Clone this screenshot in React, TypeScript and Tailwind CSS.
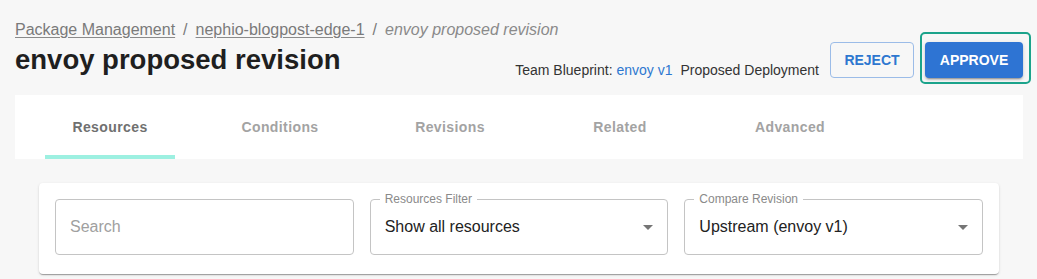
import React from "react";

function Arrow() {
  return (
    <svg width="24" height="24" viewBox="0 0 24 24" className="shrink-0 text-[#757575]" fill="currentColor">
      <path d="M7 10l5 5 5-5z" />
    </svg>
  );
}

function Field({ label, value }: { label: string; value: string }) {
  return (
    <div className="relative flex h-[56px] items-center justify-between rounded-[4px] border border-[#c4c4c4] pl-[14px] pr-[7px]">
      <span className="pointer-events-none absolute -top-[9px] left-[9px] bg-white px-[5px] text-[12px] leading-[16px] text-[#8a8a8a]">
        {label}
      </span>
      <span className="text-[16px] leading-[20px] text-[#222]">{value}</span>
      <Arrow />
    </div>
  );
}

export default function App() {
  const tabs = ["Resources", "Conditions", "Revisions", "Related", "Advanced"];
  return (
    <div className="h-screen w-full overflow-hidden bg-[#f7f7f7] font-['Liberation_Sans',Arial,sans-serif] text-[#222]">
      <div className="pl-[15px] pr-[14px] pt-[18px]">
        <div className="flex items-start justify-between">
          <div className="min-w-0 flex-1">
            <nav className="flex items-center whitespace-nowrap text-[16px] leading-[24px] text-[#7a7a7a]">
              <span className="underline decoration-[#8a8a8a] underline-offset-[2px]">Package Management</span>
              <span className="mx-[8px]">/</span>
              <span className="underline decoration-[#8a8a8a] underline-offset-[2px]">nephio-blogpost-edge-1</span>
              <span className="mx-[8px]">/</span>
              <span className="italic text-[#8a8a8a]">envoy proposed revision</span>
            </nav>
            <h1 className="mt-[1px] whitespace-nowrap text-[27.5px] font-bold leading-[34px] text-[#1f1f1f]">envoy proposed revision</h1>
          </div>
          <div className="mt-[24px] flex shrink-0 items-start">
            <div className="mt-[18px] whitespace-nowrap text-[14px] leading-[20px] text-[#333]">
              Team Blueprint: <span className="text-[#2e77d0]">envoy v1</span>
              <span className="ml-[8px]">Proposed Deployment</span>
            </div>
            <button className="ml-[11px] h-[36px] w-[84px] rounded-[4px] border border-[#9bbce8] bg-transparent text-[14px] font-bold text-[#2e77d0]">
              REJECT
            </button>
            <div className="relative ml-[11px] flex">
              <button className="h-[36px] w-[98px] rounded-[4px] bg-[#2e74d3] text-[14px] font-bold text-white shadow-[0_3px_1px_-2px_rgba(0,0,0,0.2),0_2px_2px_0_rgba(0,0,0,0.14),0_1px_5px_0_rgba(0,0,0,0.12)]">
                APPROVE
              </button>
              <div className="pointer-events-none absolute -bottom-[6px] -left-[5px] -right-[8px] -top-[10px] rounded-[5px] border-2 border-[#1ba38b]" />
            </div>
          </div>
        </div>

        <div className="mt-[15px] flex h-[64px] gap-[40px] bg-white pl-[30px]">
          {tabs.map((t, i) => (
            <div key={t} className="relative flex h-full w-[130px] items-center justify-center">
              <span
                className={
                  i === 0
                    ? "text-[14px] font-bold tracking-[0.4px] text-[#707070]"
                    : "text-[14px] font-bold tracking-[0.4px] text-[#a3a3a3]"
                }
              >
                {t}
              </span>
              {i === 0 && <div className="absolute bottom-0 left-0 right-0 h-[4px] bg-[#9df0e1]" />}
            </div>
          ))}
        </div>

        <div className="px-[24px] pt-[24px]">
          <div className="grid grid-cols-3 gap-[16px] rounded-[4px] bg-white px-[16px] pb-[19px] pt-[16px] shadow-[0_2px_1px_-1px_rgba(0,0,0,0.2),0_1px_1px_0_rgba(0,0,0,0.14),0_1px_3px_0_rgba(0,0,0,0.12)]">
            <div className="flex h-[56px] items-center rounded-[4px] border border-[#c4c4c4] px-[14px]">
              <input
                placeholder="Search"
                className="w-full bg-transparent text-[16px] leading-[20px] text-[#222] outline-none placeholder:text-[#a0a0a0]"
              />
            </div>
            <Field label="Resources Filter" value="Show all resources" />
            <Field label="Compare Revision" value="Upstream (envoy v1)" />
          </div>
        </div>
      </div>
    </div>
  );
}
